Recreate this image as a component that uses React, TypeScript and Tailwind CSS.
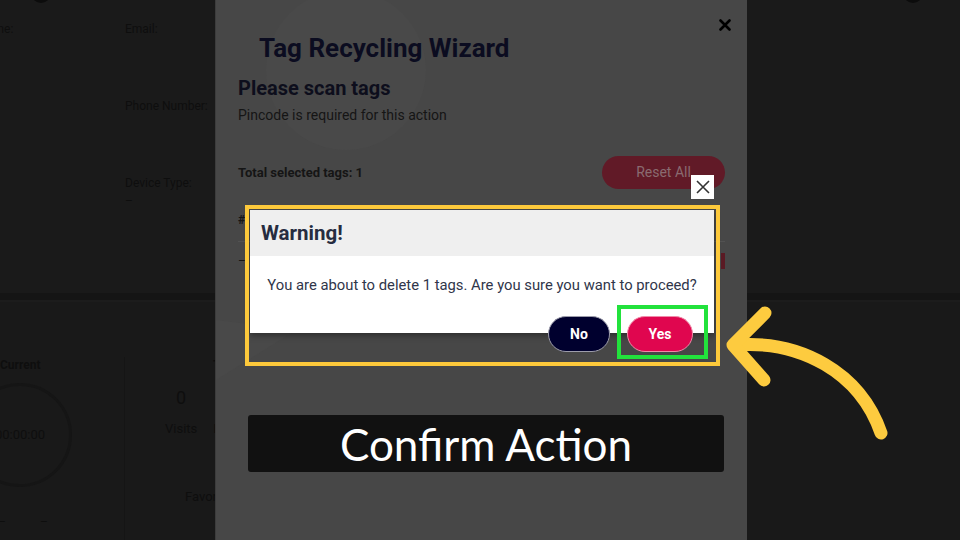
import React from "react";

const ui = { fontFamily: "Roboto, 'Noto Sans', sans-serif" };

const Background = () => {
  return (
    <div className="flex flex-col h-full text-[12px] leading-[16px] text-[#0e0e0e]">
      <div className="h-[293px] bg-[#1a1a1a] flex flex-col">
        <div className="flex justify-between h-0">
          <div className="ml-[31px] -mt-[17px] w-[20px] h-[20px] rounded-full border-[3px] border-[#0c0c0c]" />
          <div className="mr-[37px] -mt-[17px] w-[20px] h-[20px] rounded-full border-[3px] border-[#0c0c0c]" />
        </div>
        <div className="flex">
          <div className="w-[125px] pt-[21px] overflow-hidden">
            <span className="block -ml-[44px]">Username:</span>
          </div>
          <div className="flex flex-col pt-[21px]">
            <span>Email:</span>
            <span className="mt-[61px]">Phone Number:</span>
            <span className="mt-[61px]">Device Type:</span>
            <span className="mt-[2px]">–</span>
          </div>
        </div>
      </div>
      <div className="h-[7px] bg-[#151515]" />
      <div className="flex-1 bg-[#191919] border-t-[2px] border-[#1c1c1c] flex">
        <div className="w-[124px] pt-[55px] flex flex-col">
          <span className="font-bold text-[12px]">Current</span>
          <div className="mt-[10px] -ml-[32px] w-[104px] h-[104px] rounded-full border-[3px] border-[#151515] flex items-center justify-center text-[13px]">
            00:00:00
          </div>
          <div className="mt-[27px] flex gap-[34px] -ml-[2px]">
            <span>–</span>
            <span>–</span>
          </div>
        </div>
        <div className="mt-[55px] flex-1 border-l border-[#151515] flex flex-col">
          <span className="ml-[88px] font-bold">Totals</span>
          <div className="ml-[40px] mt-[14px] flex gap-[16px] text-[13px]">
            <div className="flex flex-col items-center gap-[12px]">
              <span className="text-[18px] leading-[22px]">0</span>
              <span>Visits</span>
            </div>
            <div className="flex flex-col items-center gap-[12px]">
              <span className="text-[18px] leading-[22px]">3</span>
              <span>Logs</span>
            </div>
          </div>
          <span className="ml-[60px] mt-[52px] text-[13px]">Favorites</span>
        </div>
      </div>
    </div>
  );
};

const Modal = () => {
  return (
    <div className="absolute left-[215px] top-0 w-[532px] h-[540px] bg-[#474747] border-l border-[#3c3c3c] overflow-hidden">
      <svg className="absolute left-0 top-0" width="532" height="540">
        <circle cx="130" cy="70" r="80" fill="#494949" />
        <path d="M0 380 L 80 330 L 0 320 Z" fill="#494949" />
      </svg>
      <div className="absolute right-[16px] top-[19px]">
        <svg width="12" height="12" viewBox="0 0 12 12">
          <path d="M1.5 1.5 L10.5 10.5 M10.5 1.5 L1.5 10.5" stroke="#000" strokeWidth="2.6" strokeLinecap="round" />
        </svg>
      </div>
      <div className="relative px-[22px] pt-[31px] flex flex-col">
        <h1 className="ml-[21px] text-[26px] leading-[34px] font-bold text-[#0b0c20]">Tag Recycling Wizard</h1>
        <h2 className="mt-[10px] text-[20px] leading-[26px] font-bold text-[#0d0e1c]">Please scan tags</h2>
        <p className="mt-[5px] text-[14px] leading-[18px] text-[#151515]">Pincode is required for this action</p>
        <div className="mt-[32px] flex items-center justify-between">
          <span className="text-[13px] font-bold text-[#151515]">Total selected tags: 1</span>
          <div className="w-[123px] h-[33px] rounded-full bg-[#611a27] text-[#8a6b70] text-[14px] flex items-center justify-center">
            Reset All
          </div>
        </div>
        <div className="mt-[10px] h-[43px] border-b border-[#525252] flex items-center text-[12px] text-[#151515] font-bold">
          #
        </div>
        <div className="h-[38px] flex items-center justify-between text-[12px] text-[#151515]">
          <span>–</span>
          <span className="w-[4px] h-[16px] bg-[#5a1a24]" />
        </div>
      </div>
    </div>
  );
};

const Warning = () => {
  return (
    <>
      <div className="absolute left-[691px] top-[175px] w-[23px] h-[24px] bg-white flex items-center justify-center">
        <svg width="14" height="14" viewBox="0 0 14 14">
          <path d="M1 1 L13 13 M13 1 L1 13" stroke="#333" strokeWidth="1.6" />
        </svg>
      </div>
      <div className="absolute left-[250px] top-[210px] w-[464px] h-[123px] bg-white shadow-[0_3px_6px_rgba(0,0,0,0.35)] flex flex-col">
        <div className="h-[46px] shrink-0 bg-[#efefef] flex items-center pl-[11px]">
          <span className="text-[20.5px] font-bold text-[#262c40]">Warning!</span>
        </div>
        <p className="shrink-0 mt-[19px] text-[14.8px] leading-[20px] text-[#30364a] text-center">
          You are about to delete 1 tags. Are you sure you want to proceed?
        </p>
        <div className="shrink-0 mt-[21px] flex justify-end gap-[17px] pr-[21px]">
          <button className="w-[62px] h-[36px] rounded-full bg-[#00002e] border border-[#9c9cab] text-white text-[14px] font-bold">
            No
          </button>
          <button className="w-[66px] h-[36px] rounded-full bg-[#e0064f] border border-[#f08aa8] text-white text-[14px] font-bold">
            Yes
          </button>
        </div>
      </div>
      <div className="absolute left-[245px] top-[205px] w-[475px] h-[161px] border-[4px] border-[#fdc93b]" />
      <div className="absolute left-[617px] top-[305px] w-[91px] h-[54px] border-[4px] border-[#22e23c]" />
    </>
  );
};

const Arrow = () => {
  return (
    <svg className="absolute left-0 top-0 pointer-events-none" width="960" height="540">
      <path
        d="M736 345 C 800 340, 860 372, 881 433"
        fill="none"
        stroke="#fdcb3f"
        strokeWidth="13"
        strokeLinecap="round"
      />
      <path
        d="M765 313 L 733 345 L 764 380"
        fill="none"
        stroke="#fdcb3f"
        strokeWidth="13"
        strokeLinecap="round"
        strokeLinejoin="round"
      />
    </svg>
  );
};

export default function App() {
  return (
    <div className="relative w-[960px] h-[540px] overflow-hidden bg-[#191919]" style={ui}>
      <Background />
      <Modal />
      <Warning />
      <div
        className="absolute left-[248px] top-[415px] w-[476px] h-[57px] bg-[#111111] rounded-[3px] flex items-center justify-center text-white text-[44px] leading-none"
        style={{ fontFamily: "Lato, 'Liberation Sans', sans-serif" }}
      >
        Confirm Action
      </div>
      <Arrow />
    </div>
  );
}
